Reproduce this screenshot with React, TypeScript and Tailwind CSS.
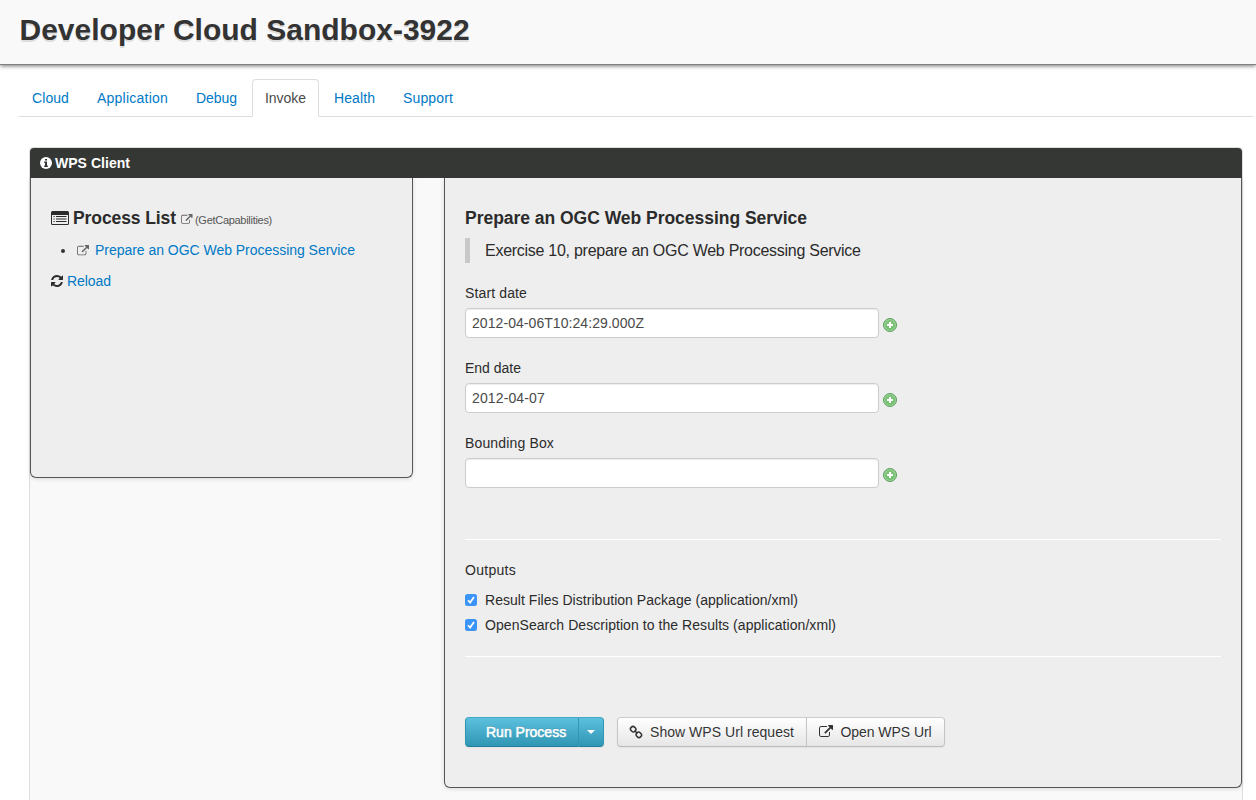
import React, { useState } from "react";

type IconProps = { className?: string };

function ExternalLink({ className }: IconProps) {
  return (
    <svg viewBox="0 0 1792 1792" fill="currentColor" className={className}>
      <path d="M1408 928v320q0 119-84.500 203.500t-203.500 84.500h-832q-119 0-203.500-84.500t-84.500-203.500v-832q0-119 84.500-203.500t203.500-84.500h704q14 0 23 9t9 23v64q0 14-9 23t-23 9h-704q-66 0-113 47t-47 113v832q0 66 47 113t113 47h832q66 0 113-47t47-113v-320q0-14 9-23t23-9h64q14 0 23 9t9 23zm384-864v512q0 26-19 45t-45 19-45-19l-176-176-652 652q-10 10-23 10t-23-10l-114-114q-10-10-10-23t10-23l652-652-176-176q-19-19-19-45t19-45 45-19h512q26 0 45 19t19 45z" />
    </svg>
  );
}

function Refresh({ className }: IconProps) {
  return (
    <svg viewBox="128 128 1536 1536" fill="currentColor" className={className}>
      <path d="M1639 1056q0 5-1 7-64 268-268 434.500t-478 166.500q-146 0-282.500-55t-243.500-157l-129 129q-19 19-45 19t-45-19-19-45v-448q0-26 19-45t45-19h448q26 0 45 19t19 45-19 45l-137 137q71 66 161 102t187 36q134 0 250-65t186-179q11-17 53-117 8-23 30-23h192q13 0 22.500 9.500t9.500 22.500zm25-800v448q0 26-19 45t-45 19h-448q-26 0-45-19t-19-45 19-45l138-138q-148-137-349-137-134 0-250 65t-186 179q-11 17-53 117-8 23-30 23h-199q-13 0-22.500-9.500t-9.500-22.500v-7q65-268 270-434.500t480-166.500q146 0 284 55.500t245 156.500l130-129q19-19 45-19t45 19 19 45z" />
    </svg>
  );
}

function InfoCircle({ className }: IconProps) {
  return (
    <svg viewBox="0 0 12 12" className={className}>
      <circle cx="6" cy="6" r="6" fill="#fff" />
      <path d="M5 2h2v1.600H5zM4.200 4.600H7v4h.8V10H4.200V8.600H5V6h-.8z" fill="#353734" />
    </svg>
  );
}

function ListAlt({ className }: IconProps) {
  return (
    <svg viewBox="0 0 18 14" fill="currentColor" className={className}>
      <path
        fillRule="evenodd"
        d="M1.600 0h14.800A1.600 1.600 0 0 1 18 1.600v10.800a1.600 1.600 0 0 1-1.600 1.600H1.600A1.600 1.600 0 0 1 0 12.400V1.600A1.600 1.600 0 0 1 1.600 0zM1 4v8.600q0 .4.4.4h15.200q.4 0 .4-.4V4z"
      />
      <path d="M2.500 5h1.200v1H2.500zM2.500 7.500h1.200v1H2.500zM2.500 10h1.200v1H2.500zM5 5h10.500v1H5zM5 7.500h10.500v1H5zM5 10h10.500v1H5z" />
    </svg>
  );
}

function Chain({ className }: IconProps) {
  return (
    <svg viewBox="0 0 14 14" fill="none" stroke="currentColor" strokeWidth="1.500" className={className}>
      <g transform="rotate(45 7 7)">
        <rect x="0.300" y="4.600" width="5.400" height="4.800" rx="2.200" />
        <rect x="8.300" y="4.600" width="5.400" height="4.800" rx="2.200" />
        <path d="M5 7h4" />
      </g>
    </svg>
  );
}

function AddIcon({ className }: IconProps) {
  return (
    <svg viewBox="0 0 14 14" className={className}>
      <defs>
        <linearGradient id="add" x1="0" y1="0" x2="0" y2="1">
          <stop offset="0" stopColor="#82c37e" />
          <stop offset="1" stopColor="#6fc06a" />
        </linearGradient>
      </defs>
      <circle cx="7" cy="7" r="6.500" fill="#9ed199" stroke="#57a05a" />
      <circle cx="7" cy="7" r="5" fill="url(#add)" />
      <path d="M6 4h2v2h2v2H8v2H6V8H4V6h2z" fill="#fff" />
    </svg>
  );
}

const tabs = [
  { label: "Cloud", size: "w-[63px] tracking-[0.08px]" },
  { label: "Application", size: "w-[97px] tracking-[0.23px]" },
  { label: "Debug", size: "w-[67px] tracking-[-0.03px]" },
  { label: "Invoke", size: "w-[67px] tracking-[-0.04px]" },
  { label: "Health", size: "w-[67px] tracking-[0.09px]" },
  { label: "Support", size: "w-[76px] tracking-[0.14px]" },
];

const initialFields = [
  { label: "Start date", value: "2012-04-06T10:24:29.000Z", track: "tracking-[0.13px]", valueTrack: "tracking-[0.064px]" },
  { label: "End date", value: "2012-04-07", track: "", valueTrack: "tracking-[0.13px]" },
  { label: "Bounding Box", value: "", track: "tracking-[0.15px]", valueTrack: "" },
];

const outputs = [
  { label: "Result Files Distribution Package (application/xml)", track: "tracking-[0.035px]" },
  { label: "OpenSearch Description to the Results (application/xml)", track: "tracking-[0.058px]" },
];

const secondary =
  "flex h-[30px] items-center border border-[#bbb] border-x-[#c5c5c5] border-t-[#ccc] bg-linear-to-b from-white to-[#e6e6e6] pl-3 text-[#333] [text-shadow:0_1px_1px_rgba(255,255,255,0.75)] shadow-[0_1px_2px_rgba(0,0,0,0.05)]";

function Field({ label, value, track, valueTrack }: (typeof initialFields)[number]) {
  const [text, setText] = useState(value);
  return (
    <div className="h-[75px]">
      <label className={`block h-[25px] leading-5 ${track}`}>{label}</label>
      <div className="flex items-center">
        <input
          value={text}
          aria-label={label}
          onChange={(e) => setText(e.target.value)}
          className={`h-[30px] w-[414px] rounded-[4px] border border-[#ccc] bg-white px-1.5 text-[#4a4a4a] shadow-[inset_0_1px_1px_rgba(0,0,0,0.075)] outline-none ${valueTrack}`}
        />
        <AddIcon className="mt-1 ml-1 size-3.5" />
      </div>
    </div>
  );
}

export default function App() {
  const [active, setActive] = useState("Invoke");
  const [checked, setChecked] = useState([true, true]);

  return (
    <div className="flex h-[800px] w-[1256px] flex-col overflow-hidden bg-white font-['Liberation_Sans',Arial,sans-serif] text-sm leading-5 text-[#2b2b2b]">
      <header className="h-[64px] shrink-0 bg-[#f9f9f9] pl-[19.5px] shadow-[0_1px_0_#828282,0_2px_4px_#777]">
        <h1 className="pt-[10px] text-[30px] leading-10 font-bold text-[#333] [text-shadow:0_2px_0_#ddd]">
          Developer Cloud Sandbox-3922
        </h1>
      </header>

      <nav className="mt-[15px] mr-[3px] ml-[19px] flex h-[38px] shrink-0 gap-0.5 border-b border-[#ddd]">
        {tabs.map((t) => (
          <button
            key={t.label}
            onClick={() => setActive(t.label)}
            className={`h-[38px] shrink-0 rounded-t-[4px] border px-3 text-left whitespace-nowrap ${t.size} ${
              active === t.label ? "border-[#ddd] border-b-white bg-white text-[#4a4a4a]" : "border-transparent text-[#0079c6]"
            }`}
          >
            {t.label}
          </button>
        ))}
      </nav>

      <main className="mt-[30px] mr-[13px] ml-[29px] flex h-[700px] shrink-0 flex-col rounded-t-[4px] border border-[#ddd] bg-[#f9f9f9]">
        <div className="z-10 flex h-[30px] shrink-0 items-center rounded-t-[4px] bg-[#353734] pl-[10px] font-bold text-white">
          <InfoCircle className="mr-[3px] size-3" />
          <span className="tracking-[0.03px]">WPS Client</span>
        </div>

        <div className="flex items-start justify-between">
          <section className="h-[300px] w-[383px] rounded-b-[6px] border border-t-0 border-[#555] bg-[#eee] pt-[30px] pl-5 shadow-[0_1px_4px_rgba(0,0,0,0.13)]">
            <h2 className="flex h-5 items-center">
              <ListAlt className="-mt-px h-3.5 w-[18px]" />
              <span className="ml-1 text-[17.5px] font-bold tracking-[-0.09px]">Process List</span>
              <ExternalLink className="mt-[3px] ml-[5px] size-[11.5px] text-[#666]" />
              <span className="mt-[3px] ml-[2.5px] text-[11px] tracking-[-0.29px] text-[#555]">(GetCapabilities)</span>
            </h2>
            <ul className="mt-3 flex h-5 items-center">
              <li className="flex items-center">
                <span className="mt-0.5 ml-[10px] size-1 rounded-full bg-[#333]" />
                <ExternalLink className="mt-px ml-3 size-[12px] text-[#666]" />
                <a className="ml-[6px] tracking-[-0.03px] text-[#0079c6]">Prepare an OGC Web Processing Service</a>
              </li>
            </ul>
            <div className="mt-[11px] flex h-5 items-center">
              <Refresh className="size-3" />
              <a className="ml-1 tracking-[-0.06px] text-[#0079c6]">Reload</a>
            </div>
          </section>

          <section className="h-[610px] w-[798px] rounded-b-[6px] border border-t-0 border-[#555] bg-[#eee] px-5 pt-[30px] shadow-[0_1px_4px_rgba(0,0,0,0.13)]">
            <h2 className="h-5 text-[17.5px] leading-5 font-bold tracking-[-0.028px]">Prepare an OGC Web Processing Service</h2>
            <blockquote className="mt-[10px] h-[25px] border-l-[5px] border-[#c8c8c8] pl-[15px] text-[16px] leading-[25px] tracking-[-0.27px]">
              Exercise 10, prepare an OGC Web Processing Service
            </blockquote>
            <form className="mt-5">
              {initialFields.map((f) => (
                <Field key={f.label} {...f} />
              ))}
            </form>
            <div className="mt-[31px] border-t border-white pt-5">
              <div className="h-5 tracking-[0.28px]">Outputs</div>
              {outputs.map((o, i) => (
                <label key={o.label} className={`flex h-5 items-center ${i === 0 ? "mt-[10px]" : "mt-[5px]"}`}>
                  <input
                    type="checkbox"
                    className="sr-only"
                    checked={checked[i]}
                    onChange={() => setChecked(checked.map((c, j) => (j === i ? !c : c)))}
                  />
                  <span className={`size-3 rounded-[2.5px] ${checked[i] ? "bg-[#3b94f7]" : "border border-[#aaa] bg-white"}`}>
                    {checked[i] && (
                      <svg viewBox="0 0 12 12" fill="none" stroke="#fff" strokeWidth="1.700" className="size-3">
                        <path d="M3 6.300l2.100 2.300L9 3" />
                      </svg>
                    )}
                  </span>
                  <span className={`ml-2 ${o.track}`}>{o.label}</span>
                </label>
              ))}
            </div>
            <div className="mt-[21px] flex border-t border-white pt-[60px]">
              <div className="flex h-[30px] rounded-[4px] text-white shadow-[0_1px_2px_rgba(0,0,0,0.05)]">
                <button className="w-[113px] rounded-l-[4px] border border-r-0 border-[#2f96b4] border-t-[#46a6c4] border-b-[#257f9a] bg-linear-to-b from-[#5bc0de] to-[#2f96b4] pl-5 text-left whitespace-nowrap [-webkit-text-stroke:0.5px_white] [text-shadow:0_-1px_0_rgba(0,0,0,0.2)]">
                  Run Process
                </button>
                <button
                  aria-label="More run options"
                  className="flex w-[26px] items-center justify-center rounded-r-[4px] border border-[#2f96b4] border-t-[#46a6c4] border-b-[#257f9a] bg-linear-to-b from-[#5bc0de] to-[#2f96b4]"
                >
                  <svg viewBox="0 0 8 4" className="h-1 w-2">
                    <path d="M0 0h8L4 4z" fill="#fff" />
                  </svg>
                </button>
              </div>
              <div className="ml-[13px] flex">
                <button className={`${secondary} w-[190px] rounded-l-[4px]`}>
                  <Chain className="-ml-px size-3.5" />
                  <span className="ml-[7px] whitespace-nowrap tracking-[0.04px]">Show WPS Url request</span>
                </button>
                <button className={`${secondary} -ml-px w-[139px] rounded-r-[4px]`}>
                  <ExternalLink className="size-3.5" />
                  <span className="ml-[7.5px] whitespace-nowrap tracking-[-0.06px]">Open WPS Url</span>
                </button>
              </div>
            </div>
          </section>
        </div>
      </main>
    </div>
  );
}
